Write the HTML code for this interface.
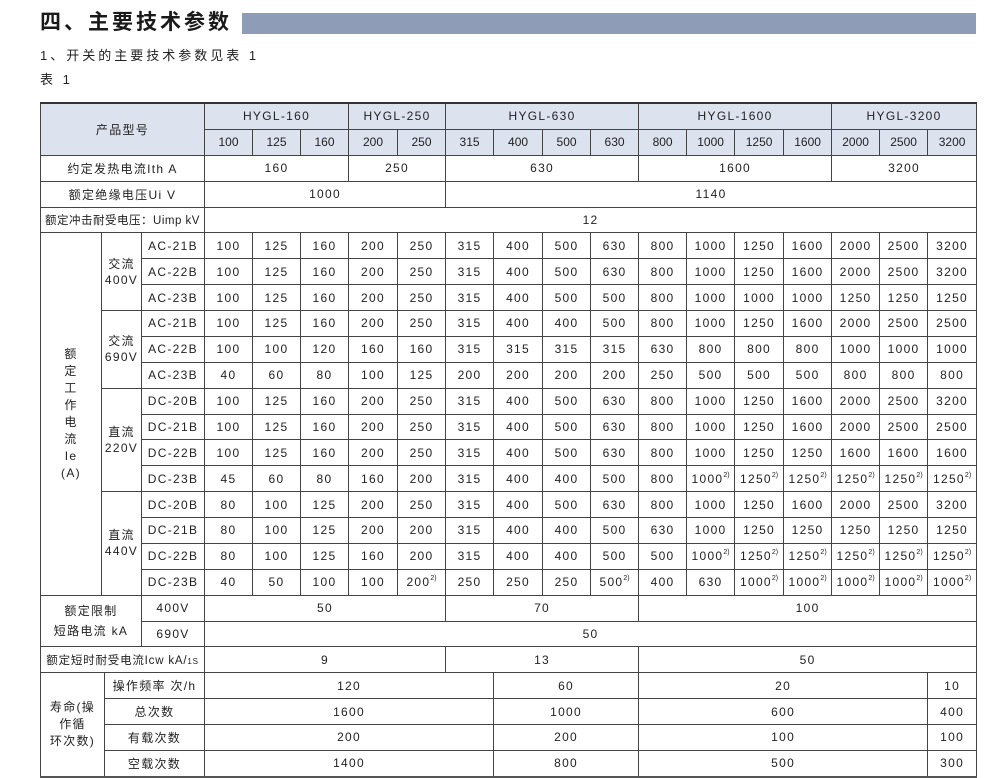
<!DOCTYPE html>
<html><head><meta charset="utf-8"><style>
body{margin:0;background:#fff;width:994px;height:777px;position:relative;overflow:hidden;font-family:"Liberation Sans","Noto Sans CJK SC",sans-serif;color:#222}
.t{position:absolute;left:40px;top:11px;font-size:21px;font-weight:bold;letter-spacing:3px;line-height:24px;color:#1a1a1a;white-space:nowrap}
.bar{position:absolute;left:242px;top:13px;width:734px;height:21px;background:#8f9cb8}
.s1{position:absolute;left:40px;top:45px;font-size:13px;letter-spacing:3px}
.s2{position:absolute;left:40px;top:69px;font-size:13px;letter-spacing:3px}
table{position:absolute;left:40px;top:102px;border-collapse:collapse;table-layout:fixed;width:936px;font-size:12px;letter-spacing:1.3px}
td{border:1px solid #444;text-align:center;height:24.88px;padding:0;white-space:nowrap;overflow:visible}
tr.h td{background:#dde2ef}
tr.n td{font-size:12px;letter-spacing:0}
table{border-top:2px solid #333;border-bottom:2px solid #555}
sup{font-size:7px;letter-spacing:0;vertical-align:6px;line-height:0}
</style></head><body>
<div class="t">四、主要技术参数</div><div class="bar"></div>
<div class="s1">1、开关的主要技术参数见表 1</div>
<div class="s2">表 1</div>
<table>
<colgroup><col style="width:61px"><col style="width:3px"><col style="width:37px"><col style="width:63px">
<col style="width:48px"><col style="width:48px"><col style="width:48px"><col style="width:49px"><col style="width:48px"><col style="width:48px"><col style="width:49px"><col style="width:48px"><col style="width:48px"><col style="width:48px"><col style="width:48px"><col style="width:49px"><col style="width:48px"><col style="width:48px"><col style="width:48px"><col style="width:49px"></colgroup>
<tr class="h"><td colspan="4" rowspan="2">产品型号</td><td colspan="3">HYGL-160</td><td colspan="2">HYGL-250</td><td colspan="4">HYGL-630</td><td colspan="4">HYGL-1600</td><td colspan="3">HYGL-3200</td></tr>
<tr class="h n"><td>100</td><td>125</td><td>160</td><td>200</td><td>250</td><td>315</td><td>400</td><td>500</td><td>630</td><td>800</td><td>1000</td><td>1250</td><td>1600</td><td>2000</td><td>2500</td><td>3200</td></tr>
<tr><td colspan="4">约定发热电流Ith A</td><td colspan="3">160</td><td colspan="2">250</td><td colspan="4">630</td><td colspan="4">1600</td><td colspan="3">3200</td></tr>
<tr><td colspan="4">额定绝缘电压Ui V</td><td colspan="5">1000</td><td colspan="11">1140</td></tr>
<tr><td colspan="4" style="letter-spacing:0.5px;font-size:11.5px">额定冲击耐受电压：Uimp kV</td><td colspan="16">12</td></tr>
<tr><td rowspan="14" style="line-height:17px">额<br>定<br>工<br>作<br>电<br>流<br>Ie<br>(A)</td><td colspan="2" rowspan="3" style="line-height:16px">交流<br>400V</td><td>AC-21B</td><td>100</td><td>125</td><td>160</td><td>200</td><td>250</td><td>315</td><td>400</td><td>500</td><td>630</td><td>800</td><td>1000</td><td>1250</td><td>1600</td><td>2000</td><td>2500</td><td>3200</td></tr>
<tr><td>AC-22B</td><td>100</td><td>125</td><td>160</td><td>200</td><td>250</td><td>315</td><td>400</td><td>500</td><td>630</td><td>800</td><td>1000</td><td>1250</td><td>1600</td><td>2000</td><td>2500</td><td>3200</td></tr>
<tr><td>AC-23B</td><td>100</td><td>125</td><td>160</td><td>200</td><td>250</td><td>315</td><td>400</td><td>500</td><td>500</td><td>800</td><td>1000</td><td>1000</td><td>1000</td><td>1250</td><td>1250</td><td>1250</td></tr>
<tr><td colspan="2" rowspan="3" style="line-height:16px">交流<br>690V</td><td>AC-21B</td><td>100</td><td>125</td><td>160</td><td>200</td><td>250</td><td>315</td><td>400</td><td>400</td><td>500</td><td>800</td><td>1000</td><td>1250</td><td>1600</td><td>2000</td><td>2500</td><td>2500</td></tr>
<tr><td>AC-22B</td><td>100</td><td>100</td><td>120</td><td>160</td><td>160</td><td>315</td><td>315</td><td>315</td><td>315</td><td>630</td><td>800</td><td>800</td><td>800</td><td>1000</td><td>1000</td><td>1000</td></tr>
<tr><td>AC-23B</td><td>40</td><td>60</td><td>80</td><td>100</td><td>125</td><td>200</td><td>200</td><td>200</td><td>200</td><td>250</td><td>500</td><td>500</td><td>500</td><td>800</td><td>800</td><td>800</td></tr>
<tr><td colspan="2" rowspan="4" style="line-height:16px">直流<br>220V</td><td>DC-20B</td><td>100</td><td>125</td><td>160</td><td>200</td><td>250</td><td>315</td><td>400</td><td>500</td><td>630</td><td>800</td><td>1000</td><td>1250</td><td>1600</td><td>2000</td><td>2500</td><td>3200</td></tr>
<tr><td>DC-21B</td><td>100</td><td>125</td><td>160</td><td>200</td><td>250</td><td>315</td><td>400</td><td>500</td><td>630</td><td>800</td><td>1000</td><td>1250</td><td>1600</td><td>2000</td><td>2500</td><td>2500</td></tr>
<tr><td>DC-22B</td><td>100</td><td>125</td><td>160</td><td>200</td><td>250</td><td>315</td><td>400</td><td>500</td><td>630</td><td>800</td><td>1000</td><td>1250</td><td>1250</td><td>1600</td><td>1600</td><td>1600</td></tr>
<tr><td>DC-23B</td><td>45</td><td>60</td><td>80</td><td>160</td><td>200</td><td>315</td><td>400</td><td>400</td><td>500</td><td>800</td><td>1000<sup>2)</sup></td><td>1250<sup>2)</sup></td><td>1250<sup>2)</sup></td><td>1250<sup>2)</sup></td><td>1250<sup>2)</sup></td><td>1250<sup>2)</sup></td></tr>
<tr><td colspan="2" rowspan="4" style="line-height:16px">直流<br>440V</td><td>DC-20B</td><td>80</td><td>100</td><td>125</td><td>200</td><td>250</td><td>315</td><td>400</td><td>500</td><td>630</td><td>800</td><td>1000</td><td>1250</td><td>1600</td><td>2000</td><td>2500</td><td>3200</td></tr>
<tr><td>DC-21B</td><td>80</td><td>100</td><td>125</td><td>200</td><td>200</td><td>315</td><td>400</td><td>400</td><td>500</td><td>630</td><td>1000</td><td>1250</td><td>1250</td><td>1250</td><td>1250</td><td>1250</td></tr>
<tr><td>DC-22B</td><td>80</td><td>100</td><td>125</td><td>160</td><td>200</td><td>315</td><td>400</td><td>400</td><td>500</td><td>500</td><td>1000<sup>2)</sup></td><td>1250<sup>2)</sup></td><td>1250<sup>2)</sup></td><td>1250<sup>2)</sup></td><td>1250<sup>2)</sup></td><td>1250<sup>2)</sup></td></tr>
<tr><td>DC-23B</td><td>40</td><td>50</td><td>100</td><td>100</td><td>200<sup>2)</sup></td><td>250</td><td>250</td><td>250</td><td>500<sup>2)</sup></td><td>400</td><td>630</td><td>1000<sup>2)</sup></td><td>1000<sup>2)</sup></td><td>1000<sup>2)</sup></td><td>1000<sup>2)</sup></td><td>1000<sup>2)</sup></td></tr>
<tr><td colspan="3" rowspan="2" style="line-height:20px">额定限制<br>短路电流 kA</td><td>400V</td><td colspan="5">50</td><td colspan="4">70</td><td colspan="7">100</td></tr>
<tr><td>690V</td><td colspan="16">50</td></tr>
<tr><td colspan="4" style="font-size:11.5px;letter-spacing:0.8px">额定短时耐受电流Icw kA/<span style="font-size:8px">1S</span></td><td colspan="5">9</td><td colspan="4">13</td><td colspan="7">50</td></tr>
<tr><td colspan="2" rowspan="4" style="line-height:17px">寿命(操<br>作循<br>环次数)</td><td colspan="2">操作频率 次/h</td><td colspan="6">120</td><td colspan="3">60</td><td colspan="6">20</td><td>10</td></tr>
<tr><td colspan="2">总次数</td><td colspan="6">1600</td><td colspan="3">1000</td><td colspan="6">600</td><td>400</td></tr>
<tr><td colspan="2">有载次数</td><td colspan="6">200</td><td colspan="3">200</td><td colspan="6">100</td><td>100</td></tr>
<tr><td colspan="2">空载次数</td><td colspan="6">1400</td><td colspan="3">800</td><td colspan="6">500</td><td>300</td></tr>
</table>
</body></html>
